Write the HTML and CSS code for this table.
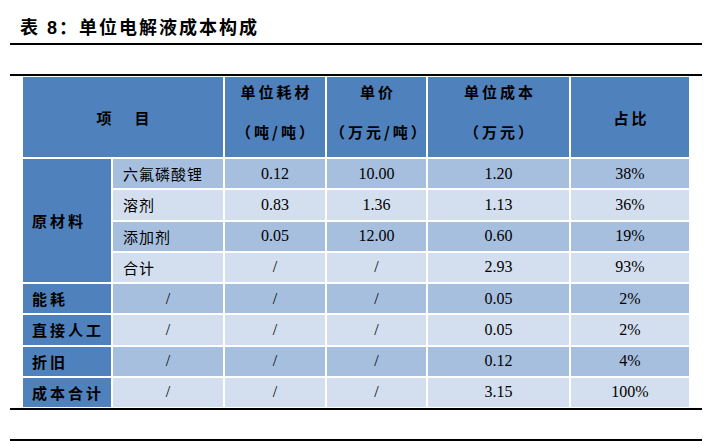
FILE: index.html
```html
<!DOCTYPE html>
<html lang="zh">
<head>
<meta charset="utf-8">
<title>单位电解液成本构成</title>
<link rel="stylesheet" href="styles.css">
</head>
<body>
<div class="page">
  <div class="title">表 8：单位电解液成本构成</div>
  <div class="rule-gap"></div>
  <div class="table">
    <div class="c h hd span2 center pair"><span>项</span><span>目</span></div>
    <div class="c h hd two"><span>单位耗材</span><span>（吨/吨）</span></div>
    <div class="c h hd two"><span>单价</span><span>（万元/吨）</span></div>
    <div class="c h hd two"><span>单位成本</span><span>（万元）</span></div>
    <div class="c h hd center">占比</div>

    <div class="c h lab rows4">原材料</div>
    <div class="c d item">六氟磷酸锂</div>
    <div class="c d num">0.12</div>
    <div class="c d num">10.00</div>
    <div class="c d num">1.20</div>
    <div class="c d num">38%</div>

    <div class="c l item">溶剂</div>
    <div class="c l num">0.83</div>
    <div class="c l num">1.36</div>
    <div class="c l num">1.13</div>
    <div class="c l num">36%</div>

    <div class="c d item">添加剂</div>
    <div class="c d num">0.05</div>
    <div class="c d num">12.00</div>
    <div class="c d num">0.60</div>
    <div class="c d num">19%</div>

    <div class="c l item">合计</div>
    <div class="c l num">/</div>
    <div class="c l num">/</div>
    <div class="c l num">2.93</div>
    <div class="c l num">93%</div>

    <div class="c h lab">能耗</div>
    <div class="c d num">/</div>
    <div class="c d num">/</div>
    <div class="c d num">/</div>
    <div class="c d num">0.05</div>
    <div class="c d num">2%</div>

    <div class="c h lab">直接人工</div>
    <div class="c l num">/</div>
    <div class="c l num">/</div>
    <div class="c l num">/</div>
    <div class="c l num">0.05</div>
    <div class="c l num">2%</div>

    <div class="c h lab">折旧</div>
    <div class="c d num">/</div>
    <div class="c d num">/</div>
    <div class="c d num">/</div>
    <div class="c d num">0.12</div>
    <div class="c d num">4%</div>

    <div class="c h lab">成本合计</div>
    <div class="c l num">/</div>
    <div class="c l num">/</div>
    <div class="c l num">/</div>
    <div class="c l num">3.15</div>
    <div class="c l num">100%</div>
  </div>
  <div class="foot"></div>
</div>
</body>
</html>
```

FILE: styles.css
```css
html, body {
  margin: 0;
  padding: 0;
  background: #ffffff;
}

.page {
  width: 692px;
  margin-left: 10px;
  color: #000;
}

.title {
  height: 29px;
  padding-top: 14px;
  padding-left: 10px;
  line-height: 28px;
  font-family: "Liberation Sans", "Noto Sans CJK SC", sans-serif;
  font-weight: 700;
  font-size: 18px;
  letter-spacing: 2px;
  border-bottom: 2px solid #000;
  white-space: nowrap;
}

.rule-gap {
  height: 29px;
  border-bottom: 2px solid #000;
}

.table {
  margin-top: 1px;
  margin-left: 13px;
  width: 666px;
  display: grid;
  grid-template-columns: 88px 110px 100px 99px 141px 118px;
  grid-template-rows: 80px repeat(8, 29.25px);
  gap: 2px;
  background: #ffffff;
}

.c {
  display: flex;
  align-items: center;
  box-sizing: border-box;
}

.h { background: #4f81bd; }
.d { background: #a7bfde; }
.l { background: #d3dfee; }

.hd {
  font-family: "Noto Sans CJK SC", sans-serif;
  font-weight: 700;
  font-size: 15px;
  letter-spacing: 3px;
  padding-left: 3px;
  justify-content: center;
}

.span2 { grid-column: span 2; }

.pair { gap: 20px; }

.two {
  flex-direction: column;
  justify-content: flex-start;
  align-items: center;
  gap: 10px;
}

.two span {
  line-height: 30px;
}

.lab {
  font-family: "Noto Sans CJK SC", sans-serif;
  font-weight: 700;
  font-size: 15px;
  letter-spacing: 3px;
  padding-left: 9px;
}

.rows4 { grid-row: span 4; }

.item {
  font-family: "Liberation Serif", "Noto Sans CJK SC", serif;
  font-size: 15px;
  letter-spacing: 1px;
  padding-left: 10px;
}

.num {
  font-family: "Liberation Serif", serif;
  font-size: 16px;
  justify-content: center;
}

.foot {
  margin-top: 1px;
  height: 29px;
  border-top: 2px solid #000;
  border-bottom: 2px solid #000;
}
```
